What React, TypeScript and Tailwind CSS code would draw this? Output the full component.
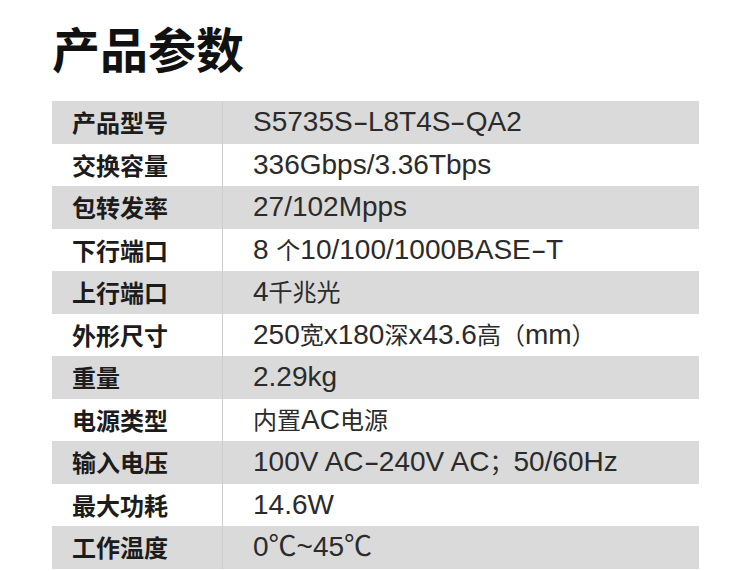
const specs: [string, string][] = [
  ['产品型号', 'S5735S-L8T4S-QA2'],
  ['交换容量', '336Gbps/3.36Tbps'],
  ['包转发率', '27/102Mpps'],
  ['下行端口', '8 个10/100/1000BASE-T'],
  ['上行端口', '4千兆光'],
  ['外形尺寸', '250宽x180深x43.6高（mm）'],
  ['重量', '2.29kg'],
  ['电源类型', '内置AC电源'],
  ['输入电压', '100V AC-240V AC；50/60Hz'],
  ['最大功耗', '14.6W'],
  ['工作温度', '0℃~45℃'],
];

// CJK runs in the value column are set a bit smaller than the latin text,
// and hyphens are drawn a little longer like in the original print
function Value({ text }: { text: string }) {
  const parts = text.split(/([\u3000-\u9fff\uff00-\uffef]+|-)/).filter(Boolean);
  return (
    <>
      {parts.map((p, i) => {
        if (p === '-') {
          return (
            <span key={i} className="inline-block scale-x-[1.7] mx-[3px]">
              -
            </span>
          );
        }
        if (/[\u3000-\u9fff\uff00-\uffef]/.test(p)) {
          return (
            <span key={i} className="text-[24px] font-['Noto_Sans_CJK_SC',sans-serif]">
              {p}
            </span>
          );
        }
        return <span key={i}>{p}</span>;
      })}
    </>
  );
}

export default function App() {
  return (
    <div className="w-[750px] h-[571px] overflow-hidden bg-white pl-[52px] pt-[19px] font-['Liberation_Sans','Noto_Sans_CJK_SC',sans-serif]">
      <h1 className="text-[48px] leading-[56px] font-bold text-[#111] font-['Noto_Sans_CJK_SC',sans-serif]">
        产品参数
      </h1>
      <div className="mt-[26px] w-[647px] flex flex-col">
        {specs.map(([label, value], i) => (
          <div
            key={label}
            className={`flex h-[42.5px] items-center ${i % 2 === 0 ? 'bg-[#dadada]' : 'bg-white'}`}
          >
            <div className="w-[171px] h-full flex items-center pl-[20px] border-r border-[#cdcdcd] text-[24px] font-bold text-[#1c1c1c] font-['Noto_Sans_CJK_SC',sans-serif]">
              {label}
            </div>
            <div className="flex-1 pl-[30px] text-[28px] leading-none text-[#2b2b2b] whitespace-nowrap">
              <Value text={value} />
            </div>
          </div>
        ))}
      </div>
    </div>
  );
}
